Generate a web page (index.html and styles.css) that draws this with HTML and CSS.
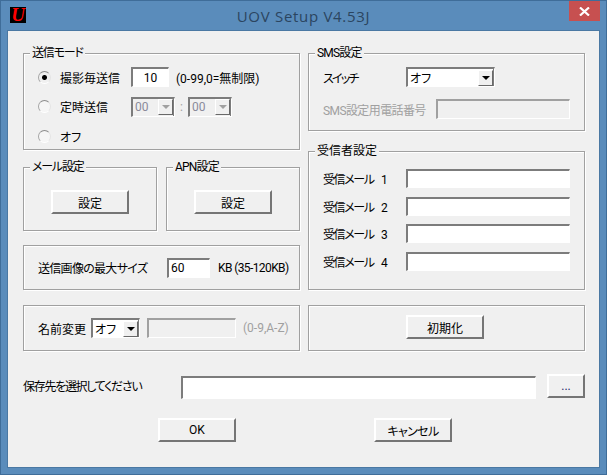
FILE: index.html
```html
<!DOCTYPE html>
<html lang="ja">
<head>
    <meta charset="UTF-8">
    <meta name="viewport" content="width=device-width, initial-scale=1.0">
    <title>UOV Setup V4.53J</title>
    <link rel="stylesheet" href="styles.css">
</head>
<body>
    <div class="window">
        <!-- タイトルバー -->
        <div class="titlebar">
            <div class="app-icon">U</div>
            <div class="title">UOV Setup V4.53J</div>
            <div class="close-button">
                <svg width="11" height="9" viewBox="0 0 11 9"><path d="M1 0.5L10 8.5M10 0.5L1 8.5" stroke="#fff" stroke-width="2.2" fill="none"/></svg>
            </div>
        </div>

        <div class="client">
            <div class="columns">
                <div class="column">
                    <!-- 送信モード -->
                    <div class="group mode-group">
                        <span class="group-title kana-title">送信モード</span>
                        <div class="mode-row">
                            <input type="radio" name="mode" class="radio" checked>
                            <span class="mode-label">撮影毎送信</span>
                            <input type="text" class="field interval-field" value="10">
                            <span class="hint">(0-99,0=無制限)</span>
                        </div>
                        <div class="mode-row">
                            <input type="radio" name="mode" class="radio">
                            <span class="mode-label">定時送信</span>
                            <div class="combo time-combo disabled">
                                <span class="combo-value">00</span>
                                <span class="combo-arrow"></span>
                            </div>
                            <span class="colon">:</span>
                            <div class="combo time-combo disabled">
                                <span class="combo-value">00</span>
                                <span class="combo-arrow"></span>
                            </div>
                        </div>
                        <div class="mode-row">
                            <input type="radio" name="mode" class="radio">
                            <span class="mode-label">オフ</span>
                        </div>
                    </div>

                    <div class="setting-groups">
                        <div class="group setting-group">
                            <span class="group-title kana-title">メール設定</span>
                            <button class="button">設定</button>
                        </div>
                        <div class="group setting-group">
                            <span class="group-title latin-title">APN設定</span>
                            <button class="button">設定</button>
                        </div>
                    </div>

                    <div class="group size-group">
                        <span class="size-label">送信画像の最大サイズ</span>
                        <input type="text" class="field size-field" value="60">
                        <span class="size-hint">KB (35-120KB)</span>
                    </div>

                    <div class="group name-group">
                        <span class="name-label">名前変更</span>
                        <div class="combo name-combo">
                            <span class="combo-value">オフ</span>
                            <span class="combo-arrow"></span>
                        </div>
                        <input type="text" class="field name-field" disabled>
                        <span class="hint muted">(0-9,A-Z)</span>
                    </div>
                </div>

                <div class="column">
                    <!-- SMS設定 -->
                    <div class="group sms-group">
                        <span class="group-title latin-title">SMS設定</span>
                        <div class="sms-row">
                            <span class="sms-label sms-switch-label">スイッチ</span>
                            <div class="combo sms-combo">
                                <span class="combo-value">オフ</span>
                                <span class="combo-arrow"></span>
                            </div>
                        </div>
                        <div class="sms-row">
                            <span class="sms-label sms-phone-label muted">SMS設定用電話番号</span>
                            <input type="text" class="field sms-field" disabled>
                        </div>
                    </div>

                    <!-- 受信者設定 -->
                    <div class="group receiver-group">
                        <span class="group-title">受信者設定</span>
                        <div class="receiver-row">
                            <span class="receiver-label">受信メール 1</span>
                            <input type="text" class="field receiver-field">
                        </div>
                        <div class="receiver-row">
                            <span class="receiver-label">受信メール 2</span>
                            <input type="text" class="field receiver-field">
                        </div>
                        <div class="receiver-row">
                            <span class="receiver-label">受信メール 3</span>
                            <input type="text" class="field receiver-field">
                        </div>
                        <div class="receiver-row">
                            <span class="receiver-label">受信メール 4</span>
                            <input type="text" class="field receiver-field">
                        </div>
                    </div>

                    <div class="group reset-group">
                        <button class="button">初期化</button>
                    </div>
                </div>
            </div>

            <!-- 保存先 -->
            <div class="save-row">
                <span class="save-label">保存先を選択してください</span>
                <input type="text" class="field save-field">
                <button class="button browse-button">...</button>
            </div>

            <div class="action-row">
                <button class="button">OK</button>
                <button class="button cancel-button">キャンセル</button>
            </div>
        </div>
    </div>
</body>
</html>
```

FILE: styles.css
```css
* {
    box-sizing: border-box;
}

body {
    margin: 0;
    font-family: Roboto, "Noto Sans CJK JP", sans-serif;
    font-size: 12px;
    font-feature-settings: "palt";
    color: #000;
}

span {
    white-space: nowrap;
}

.window {
    display: flex;
    flex-direction: column;
    width: 607px;
    height: 475px;
    padding: 0 7px 7px;
    background-color: #5a8cbb;
    border: 1px solid #3f6d99;
}

.titlebar {
    display: grid;
    grid-template-columns: 1fr auto 1fr;
    align-items: start;
    height: 30px;
    flex-shrink: 0;
}

.app-icon {
    width: 16px;
    height: 16px;
    margin: 6px 0 0 2px;
    background-color: #000;
    color: #f00;
    font-family: "Liberation Serif", serif;
    font-size: 19px;
    font-weight: bold;
    font-style: italic;
    line-height: 16px;
    text-align: center;
}

.title {
    margin-top: 5px;
    font-family: "Open Sans", sans-serif;
    font-size: 15px;
    line-height: 20px;
    letter-spacing: 0.7px;
    color: #2b4560;
}

.close-button {
    display: flex;
    align-items: center;
    justify-content: center;
    justify-self: end;
    width: 31px;
    height: 20px;
    margin-right: -1px;
    background-color: #c75050;
}

.client {
    flex: 1;
    padding: 22px 14px 0 15px;
    background-color: #f0f0f0;
    box-shadow: 0 0 0 1px #4a78a3;
}

.columns {
    display: flex;
    gap: 8px;
}

.column {
    width: 277px;
}

.group {
    position: relative;
    border: 1px solid #a0a0a0;
    box-shadow: 1px 1px 0 #fff, inset 1px 1px 0 #fff;
}

.group-title {
    position: absolute;
    top: -8px;
    left: 6px;
    padding: 0 2px;
    line-height: 15px;
    background-color: #f0f0f0;
}

.kana-title {
    letter-spacing: -1.2px;
}

.latin-title {
    letter-spacing: -0.8px;
}

.muted {
    color: #a0a0a0;
}

/* 入力欄 */
.field {
    height: 20px;
    padding: 0 2px;
    font: inherit;
    background-color: #fff;
    border-style: solid;
    border-width: 2px 1px 1px 2px;
    border-color: #7c7c7c #fff #fff #7c7c7c;
    border-radius: 0;
    outline: none;
}

.field:disabled {
    background-color: #f0f0f0;
}

.combo {
    display: flex;
    align-items: center;
    justify-content: space-between;
    height: 20px;
    padding: 0 2px 0 2px;
    background-color: #fff;
    border-style: solid;
    border-width: 2px 1px 1px 2px;
    border-color: #7c7c7c #fff #fff #7c7c7c;
    box-shadow: inset -1px 0 0 #7c7c7c;
}

.combo-arrow {
    display: flex;
    align-items: center;
    justify-content: center;
    width: 15px;
    height: 16px;
    margin-right: -1px;
    background-color: #f0f0f0;
    border-style: solid;
    border-width: 1px;
    border-color: #fff #696969 #696969 #fff;
}

.combo-arrow::after {
    content: "";
    border-top: 4px solid #000;
    border-left: 4px solid transparent;
    border-right: 4px solid transparent;
}

.combo.disabled {
    background-color: #f0f0f0;
    color: #8a8a9a;
}

.combo.disabled .combo-arrow::after {
    border-top-color: #a0a0a0;
}

.button {
    width: 78px;
    height: 24px;
    padding: 0;
    font: inherit;
    color: #000;
    background-color: #f0f0f0;
    border-style: solid;
    border-width: 2px;
    border-color: #fff #757575 #757575 #fff;
    border-radius: 0;
}

.cancel-button {
    letter-spacing: -0.6px;
}

.radio {
    appearance: none;
    width: 13px;
    height: 13px;
    margin: 0;
    flex-shrink: 0;
    background-color: #f6f6f6;
    border-radius: 50%;
    border: 1px solid;
    border-color: #8c8c8c #e4e4e4 #fff #a4a4a4;
}

.radio:checked {
    background: radial-gradient(circle, #000 0 2px, #f0f0f0 3px);
}

/* 送信モード */
.mode-group {
    height: 97px;
    padding: 13px 0 0 14px;
}

.mode-row {
    display: flex;
    align-items: center;
    height: 20px;
    margin-bottom: 9.5px;
}

.mode-label {
    width: 71px;
    margin-left: 9px;
}

.interval-field {
    width: 38px;
    text-align: center;
}

.hint {
    margin-left: 7px;
}

.time-combo {
    width: 44px;
}

.colon {
    width: 13px;
    text-align: center;
    color: #a0a0a0;
}

/* メール設定・APN設定 */
.setting-groups {
    display: flex;
    gap: 9px;
    margin-top: 17px;
}

.setting-group {
    display: flex;
    justify-content: center;
    width: 134px;
    height: 64px;
    padding-top: 22px;
}

.size-group {
    display: flex;
    align-items: center;
    height: 45px;
    margin-top: 14px;
    padding-left: 14px;
}

.size-label {
    width: 129px;
    letter-spacing: -0.7px;
}

.size-field {
    width: 43px;
}

.size-hint {
    margin-left: 8px;
    letter-spacing: -0.6px;
}

.name-group {
    display: flex;
    align-items: center;
    height: 46px;
    margin-top: 15px;
    padding-left: 14px;
}

.name-label {
    width: 53px;
}

.name-combo {
    width: 49px;
}

.name-field {
    width: 89px;
    margin-left: 7px;
    border-color: #a0a0a0 #fff #fff #a0a0a0;
}

.name-group .hint {
    margin-left: 7px;
}

/* SMS設定 */
.sms-group {
    height: 78px;
    padding: 13px 0 0 14px;
}

.sms-row {
    display: flex;
    align-items: center;
    height: 20px;
    margin-bottom: 12px;
}

.sms-label {
    width: 83px;
}

.sms-switch-label {
    letter-spacing: -1.8px;
}

.sms-phone-label {
    width: 113px;
    letter-spacing: -0.6px;
}

.sms-combo {
    width: 89px;
}

.sms-field {
    width: 134px;
    border-color: #a0a0a0 #fff #fff #a0a0a0;
}

/* 受信者設定 */
.receiver-group {
    display: flex;
    flex-direction: column;
    gap: 8.6px;
    height: 139px;
    margin-top: 20px;
    padding: 17px 0 0 14px;
}

.receiver-row {
    display: flex;
    align-items: center;
    height: 19px;
}

.receiver-label {
    width: 83px;
    letter-spacing: -1.4px;
    word-spacing: 6px;
}

.receiver-field {
    width: 164px;
    height: 19px;
}

.reset-group {
    height: 46px;
    margin-top: 15px;
    padding: 9px 0 0 97px;
}

/* 保存先 */
.save-row {
    display: flex;
    align-items: flex-start;
    margin-top: 23px;
}

.save-label {
    width: 158px;
    line-height: 26px;
    letter-spacing: -1.3px;
}

.save-field {
    width: 356px;
    height: 23px;
    margin-top: 2px;
}

.browse-button {
    width: 38px;
    margin-left: 11px;
    color: #1a2a6a;
}

.action-row {
    display: flex;
    gap: 138px;
    margin-top: 18px;
    padding-left: 135px;
}
```
